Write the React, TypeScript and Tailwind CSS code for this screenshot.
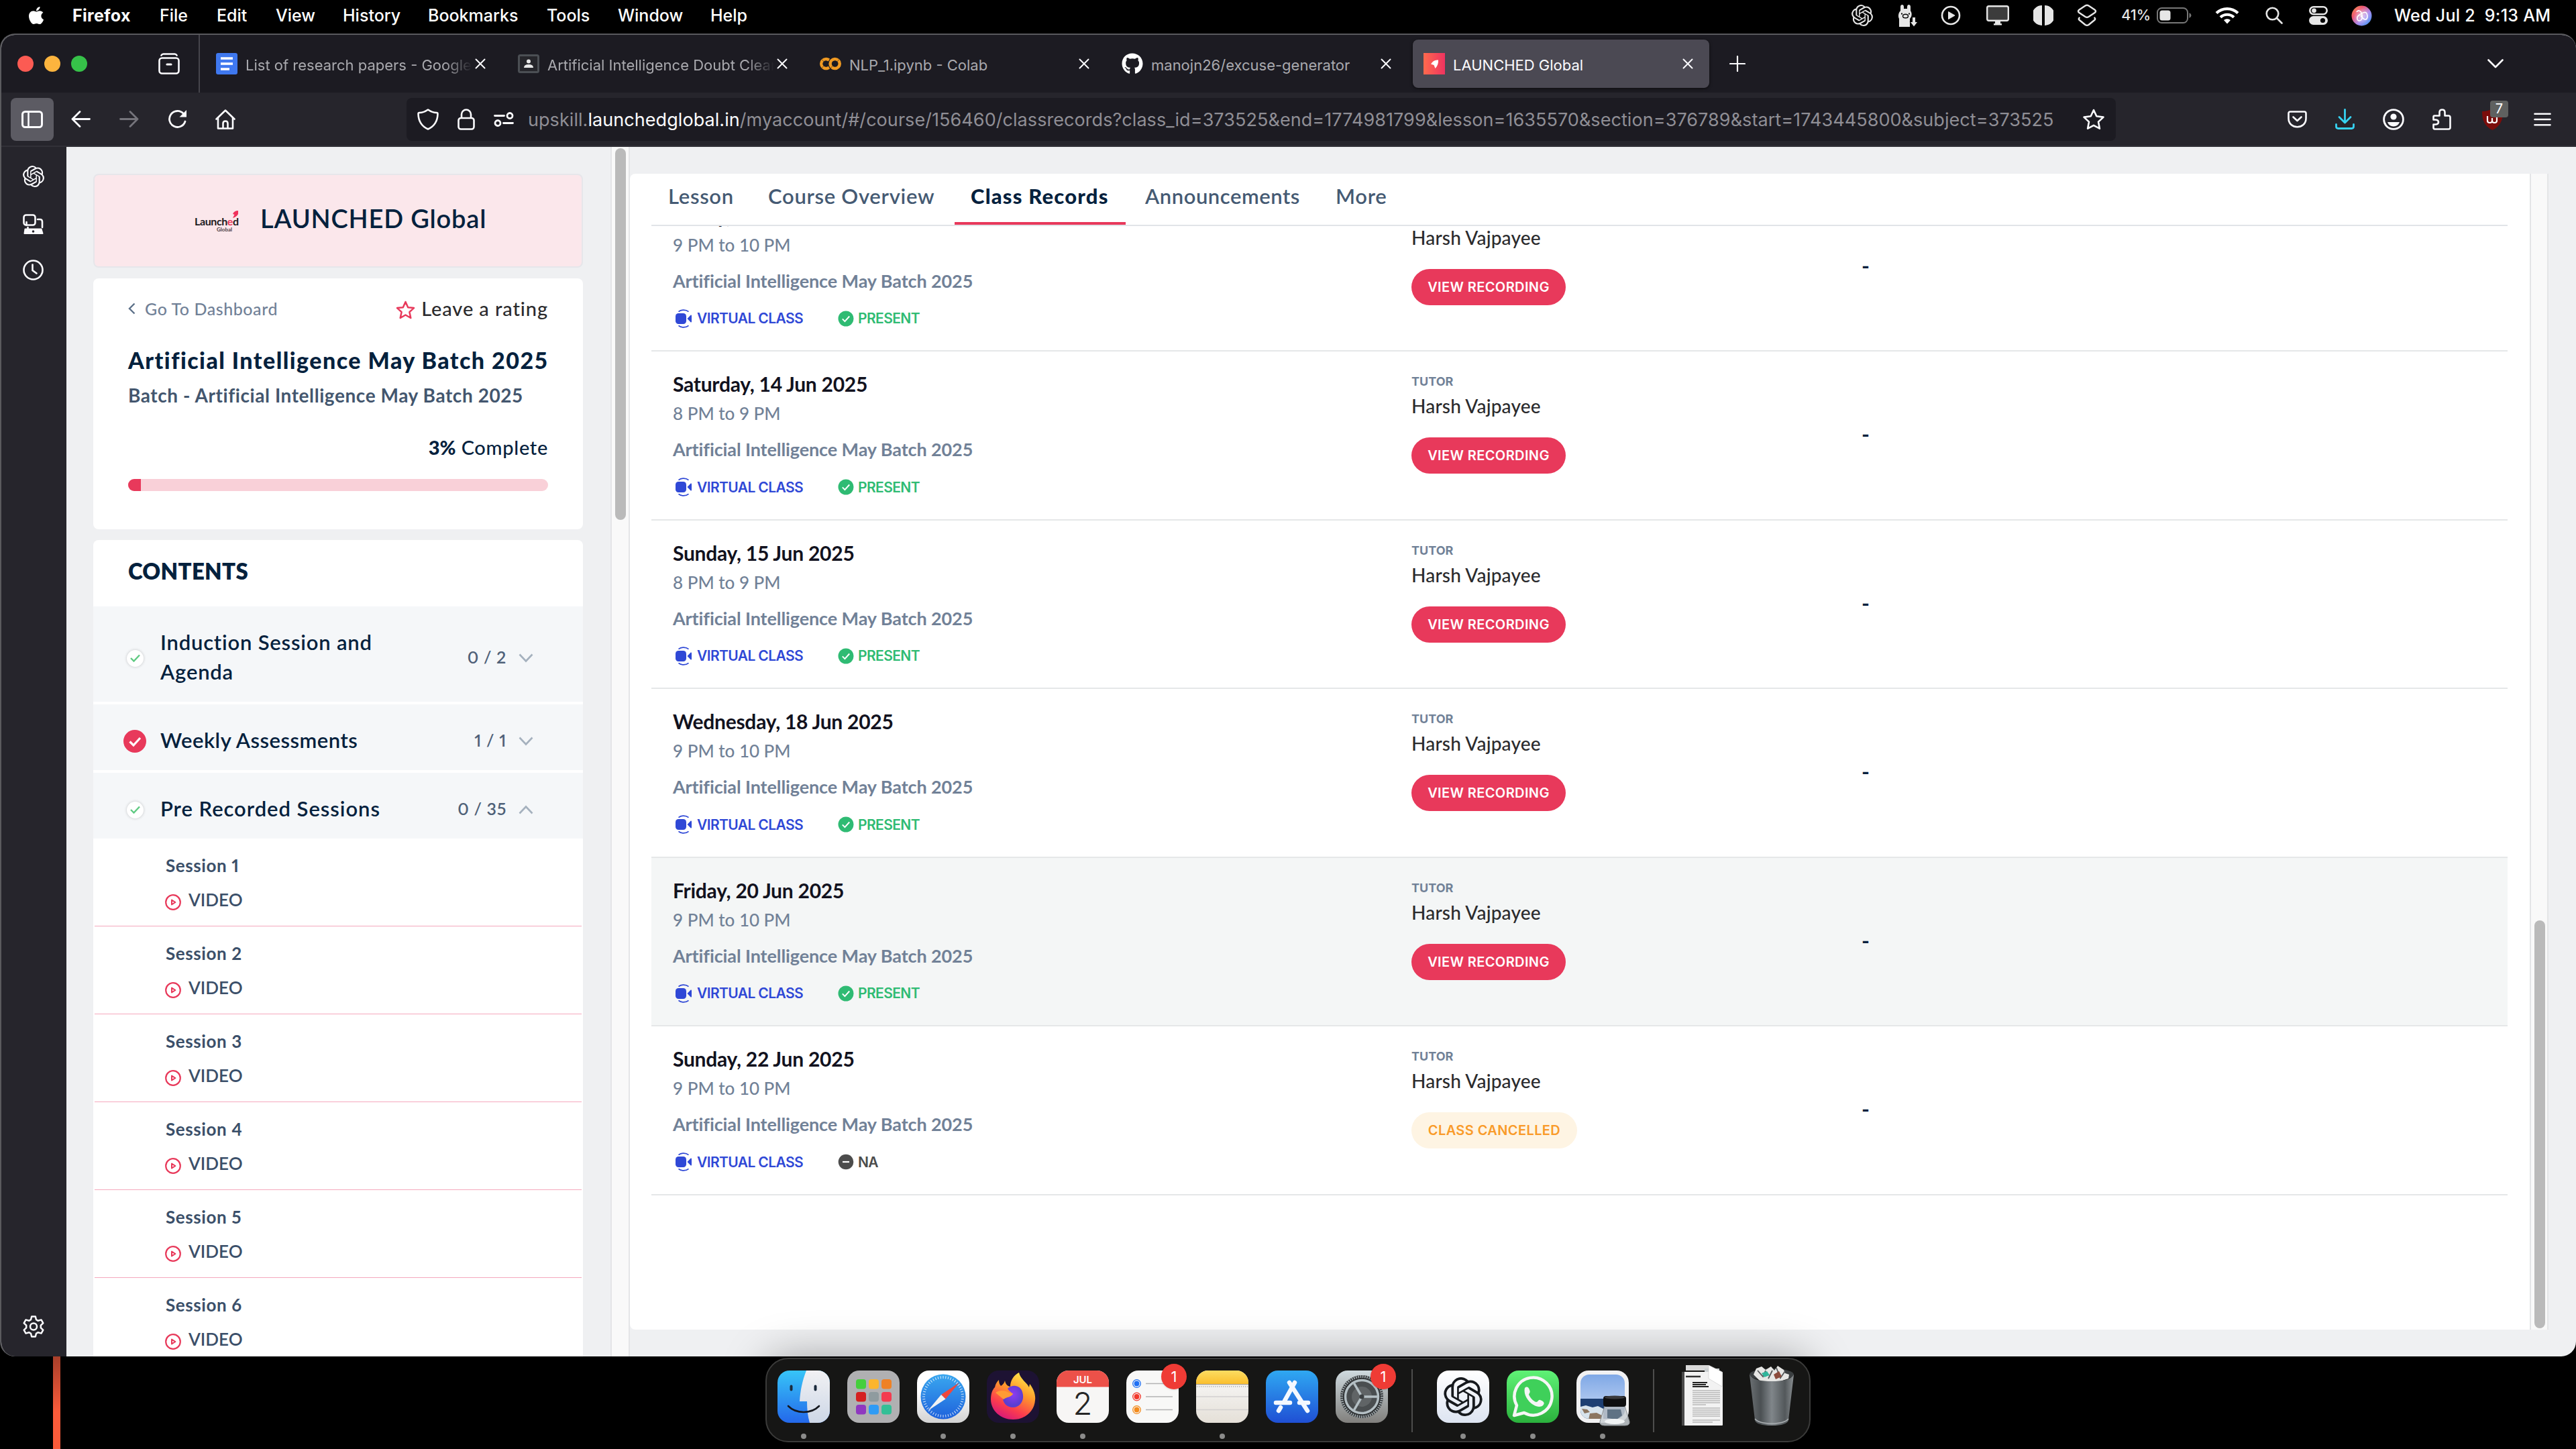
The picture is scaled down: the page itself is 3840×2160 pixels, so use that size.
import type { ReactNode } from "react";
import { FaApple, FaGithub } from "react-icons/fa";
import { SiGooglecolab, SiOpenai } from "react-icons/si";

/* ---------- small shared icons ---------- */

const Cross = () => (
  <svg width="16" height="16" viewBox="0 0 16 16" stroke="#fbfbfe" strokeWidth="2" strokeLinecap="round">
    <path d="M1.5 1.5l13 13M14.5 1.5l-13 13" />
  </svg>
);

const VirtualClassIcon = () => (
  <svg width="24" height="28" viewBox="0 0 24 28" fill="#2f48d6">
    <rect x="0" y="6" width="16" height="16" rx="4.5" />
    <path d="M17.5 14l5-5.3c.6-.6 1.5-.2 1.5.7v9.2c0 .9-.9 1.3-1.5.7z" />
    <path d="M4.5 3.6c4-3.4 11-3.4 15 0M4.5 24.4c4 3.4 11 3.4 15 0" fill="none" stroke="#2f48d6" strokeWidth="1.7" />
  </svg>
);

const PresentIcon = () => (
  <svg width="24" height="24" viewBox="0 0 24 24">
    <circle cx="12" cy="12" r="11.5" fill="#2fbb73" />
    <path d="M6.8 12.4l3.6 3.7 6.8-7.6" fill="none" stroke="#fff" strokeWidth="2" />
  </svg>
);

const NaIcon = () => (
  <svg width="24" height="24" viewBox="0 0 24 24">
    <circle cx="12" cy="12" r="11.3" fill="#4c4c4c" />
    <path d="M7 12h10" stroke="#fff" strokeWidth="2.2" />
  </svg>
);

const PlayIcon = () => (
  <svg width="24" height="24" viewBox="0 0 24 24" fill="none" stroke="#e83a5b" strokeWidth="2.2">
    <circle cx="12" cy="12" r="10.8" />
    <path d="M10 8.6v6.8l5.4-3.4z" strokeLinejoin="round" strokeWidth="2" />
  </svg>
);

const Chevron = ({ up = false }: { up?: boolean }) => (
  <svg width="22" height="14" viewBox="0 0 22 14" fill="none" stroke="#a5b1be" strokeWidth="2.6">
    <path d={up ? "M1.5 12.5L11 2.5l9.5 10" : "M1.5 1.5L11 11.5l9.5-10"} />
  </svg>
);

/* ---------- macOS menu bar ---------- */

const menuItems: { label: string; cls: string }[] = [
  { label: "Firefox", cls: "w-[130px] font-bold tracking-[0.3px]" },
  { label: "File", cls: "w-[85px]" },
  { label: "Edit", cls: "w-[88px]" },
  { label: "View", cls: "w-[100px]" },
  { label: "History", cls: "w-[127px]" },
  { label: "Bookmarks", cls: "w-[177px]" },
  { label: "Tools", cls: "w-[106px]" },
  { label: "Window", cls: "w-[138px]" },
  { label: "Help", cls: "w-[100px]" },
];

function MenuBar() {
  return (
    <div className="flex h-[50px] shrink-0 items-center pr-[38px] pb-1 pl-[39px] font-['Inter',sans-serif] text-[25px] leading-none font-medium whitespace-pre text-white">
      <FaApple className="mr-[39px] h-[30px] w-[30px] shrink-0" />
      {menuItems.map((m) => (
        <span key={m.label} className={m.cls}>{m.label}</span>
      ))}
      <div className="ml-auto flex items-center text-[#e6e6e6]">
        <SiOpenai className="mr-[37px] h-[32px] w-[32px]" />
        <svg className="mr-[35px]" width="29" height="34" viewBox="0 0 29 34" fill="#e6e6e6">
          <path d="M4 10V4c0-4 5-4 5 0v3h5V4c0-4 5-4 5 0v6c2 3 2 6 1 9l-2 3v12H2V22c-2-4-1-9 2-12z" />
          <ellipse cx="11.5" cy="18" rx="4" ry="2.8" fill="none" stroke="#050505" strokeWidth="1.4" />
          <path d="M5 14.5h2M16 14.5h2" stroke="#050505" strokeWidth="2" />
          <path d="M21.5 19.5h5v7h3.4L24 34l-5.9-7.5h3.4z" stroke="#050505" strokeWidth="1" />
        </svg>
        <svg className="mr-[38px]" width="30" height="30" viewBox="0 0 30 30" fill="none" stroke="#e6e6e6" strokeWidth="2.6">
          <circle cx="15" cy="15" r="13" />
          <path d="M11.5 9.5v11l9.5-5.5z" fill="#e6e6e6" strokeWidth="1" />
        </svg>
        <svg className="mr-[36px]" width="34" height="30" viewBox="0 0 34 30">
          <rect x="1.2" y="1.2" width="31.6" height="21.6" rx="2.5" fill="#3c3c3c" stroke="#e6e6e6" strokeWidth="2.4" />
          <path d="M13 24h8v3h2v2.5H11V27h2z" fill="#e6e6e6" />
        </svg>
        <svg className="mr-[35px]" width="30" height="30" viewBox="0 0 30 30" fill="#e6e6e6">
          <path d="M13 0v30A15 15 0 0 1 13 0zM17 0v30A15 15 0 0 0 17 0z" />
        </svg>
        <svg className="mr-[36px]" width="30" height="34" viewBox="0 0 30 34" fill="none" stroke="#e6e6e6" strokeWidth="2.5" strokeLinejoin="round">
          <path d="M12.5 2.500q2.500-1.500 5 0l9 6q3 2 0 4.500l-9 6q-2.500 1.500-5 0l-9-6q-3-2.500 0-4.500z" />
          <path d="M4.500 20q-3.500 2 0 4.500l8 6.500q2.500 1.500 5 0l8-6.500q3.500-2.500 0-4.500" />
        </svg>
        <span className="mr-[9px] text-[21.5px]">41%</span>
        <svg className="mr-[35px]" width="52" height="24" viewBox="0 0 52 24">
          <rect x="1" y="1" width="45" height="22" rx="6.5" fill="none" stroke="#777" strokeWidth="2" />
          <rect x="4.5" y="4.5" width="16" height="15" rx="3.5" fill="#e6e6e6" />
          <path d="M48.5 8v8q3-1.500 3-4t-3-4z" fill="#777" />
        </svg>
        <svg className="mr-[39px]" width="36" height="26" viewBox="0 0 36 26" fill="none" stroke="#fff" strokeWidth="4.2">
          <path d="M2 9.500c9-8.600 23-8.600 32 0" />
          <path d="M8 15.700c5.600-5.300 14.400-5.300 20 0" />
          <path d="M18 25.500l-5-5.500c2.900-2.500 7.100-2.500 10 0z" fill="#fff" stroke="none" />
        </svg>
        <svg className="mr-[39px]" width="26" height="26" viewBox="0 0 26 26" fill="none" stroke="#e6e6e6" strokeWidth="2.6" strokeLinecap="round">
          <circle cx="10.5" cy="10.5" r="8.8" />
          <path d="M17 17l7.500 7.500" />
        </svg>
        <svg className="mr-[35px]" width="28" height="28" viewBox="0 0 28 28">
          <rect x="1.3" y="1.3" width="25.4" height="11" rx="5.5" fill="none" stroke="#e6e6e6" strokeWidth="2.6" />
          <circle cx="7.5" cy="6.8" r="3.4" fill="#e6e6e6" />
          <rect x="0" y="15" width="28" height="13" rx="6.5" fill="#e6e6e6" />
          <circle cx="20.5" cy="21.5" r="3.6" fill="#050505" />
        </svg>
        <svg className="mr-[33px]" width="31" height="31" viewBox="0 0 31 31">
          <defs>
            <linearGradient id="siri" x1="0" y1="0" x2="1" y2="1">
              <stop offset="0" stopColor="#f0a04a" />
              <stop offset=".3" stopColor="#f0566e" />
              <stop offset=".6" stopColor="#a98bf0" />
              <stop offset="1" stopColor="#2f9df5" />
            </linearGradient>
            <radialGradient id="siriglow">
              <stop offset="0" stopColor="#fff" stopOpacity=".6" />
              <stop offset="1" stopColor="#fff" stopOpacity="0" />
            </radialGradient>
          </defs>
          <circle cx="15.5" cy="15.5" r="15" fill="url(#siri)" />
          <circle cx="15.5" cy="15.5" r="13" fill="url(#siriglow)" />
          <path d="M8 10c2-4 7-2 8 4s-1 9-4 9-5-5-1-8 10-7 12-3 1 9-2 9-5-3-7-6" fill="none" stroke="#fff" strokeWidth="1.6" />
        </svg>
        <span className="w-[233px] tracking-[0.28px] text-white">Wed Jul 2  9:13 AM</span>
      </div>
    </div>
  );
}

/* ---------- Firefox tab strip ---------- */

function Tab({ icon, title, width, active = false, fade = false }: { icon: ReactNode; title: string; width: string; active?: boolean; fade?: boolean }) {
  return (
    <div className={`flex h-[72px] shrink-0 items-center rounded-lg pl-4 ${width} ${active ? "bg-[#4b4953] pr-[24px] text-[#fbfbfe] shadow-[0_1px_4px_rgba(0,0,0,0.6)]" : "pr-[32px] text-[#a9a9ae]"}`}>
      <div className="mr-3 flex h-8 w-8 shrink-0 items-center justify-center">{icon}</div>
      <div className={`mr-1 min-w-0 flex-1 overflow-hidden pt-[3px] text-[22px] leading-8 whitespace-nowrap ${fade ? "[mask-image:linear-gradient(to_right,black_88%,transparent)]" : ""}`}>{title}</div>
      <Cross />
    </div>
  );
}

function TabStrip() {
  return (
    <div className="flex h-[86px] shrink-0 items-center bg-[#1c1b22] font-['Inter',sans-serif]">
      <div className="flex h-full w-[296px] shrink-0 items-center border-r-2 border-[#45444b] pl-[24px]">
        <div className="flex gap-4">
          <div className="h-6 w-6 rounded-full bg-[#fc5b53]" />
          <div className="h-6 w-6 rounded-full bg-[#fcb43e]" />
          <div className="h-6 w-6 rounded-full bg-[#36c149]" />
        </div>
        <svg className="ml-[106px]" width="32" height="32" viewBox="0 0 32 32" fill="none" stroke="#fbfbfe" strokeWidth="2.6" strokeLinecap="round" strokeLinejoin="round">
          <path d="M4.500 3.500q1-2 3-2h17q2 0 3 2" />
          <rect x="1.5" y="7.5" width="29" height="23" rx="4" />
          <path d="M13 17h6" strokeWidth="3.2" />
        </svg>
      </div>
      <div className="flex items-center pl-2">
        <Tab
          width="w-[450px]"
          fade
          title="List of research papers - Google Docs"
          icon={
            <svg width="32" height="32" viewBox="0 0 32 32">
              <rect width="32" height="32" rx="3" fill="#3f78ef" />
              <path d="M7 8h18M7 16h18M7 24h13" stroke="#fff" strokeWidth="3.6" />
            </svg>
          }
        />
        <Tab
          width="w-[450px]"
          fade
          title="Artificial Intelligence Doubt Clearing"
          icon={
            <svg width="32" height="28" viewBox="0 0 32 28">
              <rect x="1.5" y="1.5" width="29" height="25" rx="2" fill="#26262b" stroke="#4b4f54" strokeWidth="3" />
              <circle cx="16" cy="10.5" r="3" fill="#e8e8e8" />
              <path d="M9 20q0-5 7-5t7 5z" fill="#e8e8e8" />
            </svg>
          }
        />
        <Tab width="w-[450px]" title="NLP_1.ipynb - Colab" icon={<SiGooglecolab className="h-8 w-8 text-[#f09a22]" />} />
        <Tab width="w-[450px]" title="manojn26/excuse-generator" icon={<FaGithub className="h-8 w-8 text-white" />} />
        <Tab
          width="w-[442px]"
          active
          title="LAUNCHED Global"
          icon={
            <svg width="32" height="32" viewBox="0 0 32 32">
              <defs>
                <linearGradient id="lg" x1="0" y1="0" x2="1" y2="0">
                  <stop offset="0" stopColor="#ff6a4d" />
                  <stop offset="1" stopColor="#ee3360" />
                </linearGradient>
              </defs>
              <rect width="32" height="32" fill="url(#lg)" />
              <path d="M22 10.500q-7-1-11 6l4.500 1.500 2 5q5-5 4.500-12.500z" fill="#fff" />
            </svg>
          }
        />
      </div>
      <svg className="ml-[30px]" width="24" height="24" viewBox="0 0 24 24" stroke="#fbfbfe" strokeWidth="2.2" strokeLinecap="round">
        <path d="M12 1v22M1 12h22" />
      </svg>
      <svg className="mr-[108px] ml-auto" width="24" height="14" viewBox="0 0 24 14" fill="none" stroke="#fbfbfe" strokeWidth="2.6" strokeLinecap="round" strokeLinejoin="round">
        <path d="M1.500 1.500L12 12 22.500 1.500" />
      </svg>
    </div>
  );
}

/* ---------- Firefox toolbar ---------- */

function Toolbar() {
  return (
    <div className="flex h-[81px] shrink-0 items-center border-b-2 border-[#323138] bg-[#26252c] pl-[14px] font-['Inter',sans-serif]">
      <div className="flex h-16 w-16 items-center justify-center rounded-lg bg-[#5c5b63]">
        <svg width="32" height="26" viewBox="0 0 32 26" fill="none" stroke="#fbfbfe" strokeWidth="3">
          <rect x="1.5" y="1.5" width="29" height="23" rx="4" />
          <path d="M10.500 2v22" strokeWidth="2.6" />
        </svg>
      </div>
      <svg className="ml-[26px]" width="29" height="25" viewBox="0 0 29 25" fill="none" stroke="#fbfbfe" strokeWidth="2.8" strokeLinecap="round" strokeLinejoin="round">
        <path d="M13 1.500L2 12.500l11 11M2 12.500h25.500" />
      </svg>
      <svg className="ml-[43px]" width="29" height="25" viewBox="0 0 29 25" fill="none" stroke="#75747b" strokeWidth="2.8" strokeLinecap="round" strokeLinejoin="round">
        <path d="M16 1.500l11 11-11 11M27 12.500H1.500" />
      </svg>
      <svg className="ml-[43px]" width="30" height="30" viewBox="0 0 30 30" fill="none" stroke="#fbfbfe" strokeWidth="2.8" strokeLinecap="round">
        <path d="M26 18a12 12 0 1 1-2.500-11.500" />
        <path d="M28 1v10.500H17.500z" fill="#fbfbfe" stroke="none" />
      </svg>
      <svg className="ml-[41px]" width="30" height="30" viewBox="0 0 30 30" fill="none" stroke="#fbfbfe" strokeWidth="2.6" strokeLinejoin="round" strokeLinecap="round">
        <path d="M1.500 14.500L15 1.500l13.500 13" />
        <path d="M4 12.500v16h22v-16" />
        <path d="M11.500 28v-7q0-3.500 3.500-3.500t3.500 3.500v7" />
      </svg>
      <div className="ml-[255px] flex h-16 w-[2548px] shrink-0 items-center rounded-lg bg-[#1c1b22] pl-4">
        <svg width="32" height="32" viewBox="0 0 32 32" fill="none" stroke="#fbfbfe" strokeWidth="2.6" strokeLinejoin="round">
          <path d="M16 1.500q6.500 4.500 13 4.500 1.500 0 1.500 2c-.3 10-4.500 18-14.500 22.500C6 26 1.800 18 1.500 8q0-2 1.500-2 6.500 0 13-4.500z" />
        </svg>
        <svg className="ml-[28px]" width="26" height="32" viewBox="0 0 26 32" fill="none" stroke="#fbfbfe" strokeWidth="2.6">
          <rect x="1.5" y="14" width="23" height="16.5" rx="3.5" />
          <path d="M6 14V8.500a7 7 0 0 1 14 0V14" />
        </svg>
        <svg className="ml-[28px]" width="30" height="22" viewBox="0 0 30 22" fill="none" stroke="#fbfbfe" strokeWidth="2.8" strokeLinecap="round">
          <circle cx="24" cy="5.5" r="4" />
          <path d="M1.500 5.500h14M14.500 16.500h14" />
          <circle cx="6" cy="16.5" r="4" />
        </svg>
        <div className="ml-[21px] w-[2300px] pt-0.5 text-[27px] leading-none tracking-[0.06px] whitespace-nowrap text-[#8f8e95]">
          upskill.<span className="text-[#fbfbfe]">launchedglobal.in</span>/myaccount/#/course/156460/classrecords?class_id=373525&amp;end=1774981799&amp;lesson=1635570&amp;section=376789&amp;start=1743445800&amp;subject=373525
        </div>
        <svg className="ml-[17px]" width="34" height="32" viewBox="0 0 34 32" fill="none" stroke="#fbfbfe" strokeWidth="2.6" strokeLinejoin="round">
          <path d="M17 2l4.300 9.300 10.200 1.300-7.500 7 1.900 10.100L17 24.800l-8.900 4.900L10 19.600l-7.500-7 10.200-1.300z" />
        </svg>
      </div>
      <div className="ml-auto flex items-center pr-[37px]">
        <svg width="29" height="26" viewBox="0 0 29 26" fill="none" stroke="#fbfbfe" strokeWidth="2.6" strokeLinecap="round" strokeLinejoin="round">
          <path d="M4 1.500h21q2.500 0 2.500 2.500v7.500c0 17-26 17-26 0V4Q1.500 1.500 4 1.500z" />
          <path d="M8.500 9.500l6 5.500 6-5.500" />
        </svg>
        <svg className="ml-[42px]" width="29" height="31" viewBox="0 0 29 31" fill="none" stroke="#36d3f2" strokeWidth="2.8" strokeLinecap="round" strokeLinejoin="round">
          <path d="M14.500 1.500v19M6 12.500l8.500 8.500 8.500-8.500M1.500 23.500v3q0 3 3 3h20q3 0 3-3v-3" />
        </svg>
        <svg className="ml-[42px]" width="32" height="32" viewBox="0 0 32 32" fill="none" stroke="#fbfbfe" strokeWidth="2.8">
          <circle cx="16" cy="16" r="14.4" />
          <circle cx="16" cy="12" r="4.6" fill="#fbfbfe" stroke="none" />
          <path d="M7 20h18q-2.500 6.500-9 6.500T7 20z" fill="#fbfbfe" stroke="none" />
        </svg>
        <svg className="ml-[42px]" width="28" height="32" viewBox="0 0 28 32" fill="none" stroke="#fbfbfe" strokeWidth="2.6" strokeLinejoin="round">
          <path d="M3 10.500h7.500v-5q0-4 4-4t4 4v5H24q2.500 0 2.500 2.500v15q0 2.500-2.500 2.500H3.500Q1.500 30.500 1.500 28v-4.500h3.500q4-.5 4-3.500t-4-3.500H1.500V12.500q0-2 1.500-2z" />
        </svg>
        <div className="relative ml-[46px] h-8 w-[40px]">
          <svg width="31" height="32" viewBox="0 0 31 32">
            <path d="M15.500 0q7 4 15.500 4c0 14-4 22-15.500 28C4 26 0 18 0 4q8.500 0 15.500-4z" fill="#7b0d0b" />
            <path d="M8 11v7q0 3 3.500 3t3.500-3v-4 4q0 3 3.500 3t3.500-3v-7" fill="none" stroke="#fff" strokeWidth="2.2" />
          </svg>
          <div className="absolute -top-[12px] left-[12px] flex h-[25px] w-[27px] items-center justify-center rounded-[4px] bg-[#5f6160] text-[20px] leading-none text-white">7</div>
        </div>
        <svg className="ml-[37px]" width="26" height="20" viewBox="0 0 26 20" stroke="#fbfbfe" strokeWidth="2.6" strokeLinecap="round">
          <path d="M1.500 1.800h23M1.500 10h23M1.500 18.200h23" />
        </svg>
      </div>
    </div>
  );
}

function SideRail() {
  return (
    <div className="flex w-[97px] shrink-0 flex-col items-center bg-[#26252c] pt-[28px] pr-[2px] pb-[28px] text-[#fbfbfe]">
      <SiOpenai className="h-8 w-8" />
      <svg className="mt-[40px]" width="31" height="31" viewBox="0 0 31 31" fill="none" stroke="#fbfbfe" strokeWidth="2.6" strokeLinecap="round" strokeLinejoin="round">
        <rect x="1.5" y="1.5" width="17" height="15" rx="3.5" />
        <path d="M22 8h3.500q3.500 0 3.500 3.500V20M5.500 12v4.500M7.500 20v2" />
        <path d="M3.500 22.500h24l2 6.500H2.500z" fill="#fbfbfe" strokeWidth="2" />
        <circle cx="15.5" cy="26" r="1.8" fill="#26252c" stroke="none" />
      </svg>
      <svg className="mt-[37px]" width="31" height="31" viewBox="0 0 31 31" fill="none" stroke="#fbfbfe" strokeWidth="2.6" strokeLinecap="round">
        <circle cx="15.5" cy="15.5" r="14" />
        <path d="M14.500 7.500v8.500l6 4.500" />
      </svg>
      <svg className="mt-auto" width="32" height="33" viewBox="0 0 32 33" fill="none" stroke="#fbfbfe" strokeWidth="2.5" strokeLinejoin="round">
        <path d="M13.200 1.500h5.600l1.200 4.700 2.800 1.600 4.700-1.400 2.800 4.900-3.500 3.400v3.600l3.500 3.400-2.800 4.900-4.700-1.400-2.800 1.600-1.200 4.700h-5.600L12 26.800l-2.800-1.600-4.700 1.400-2.800-4.900 3.500-3.400v-3.600l-3.500-3.400 2.800-4.900 4.700 1.400L12 6.200z" />
        <circle cx="16" cy="16.5" r="5" />
      </svg>
    </div>
  );
}

/* ---------- course sidebar ---------- */

const CheckBadge = ({ done = false }: { done?: boolean }) =>
  done ? (
    <svg className="-ml-[5px] shrink-0" width="34" height="34" viewBox="0 0 34 34">
      <circle cx="17" cy="17" r="17" fill="#e8395b" />
      <path d="M9.500 17.500l5.500 5.500 10-11" fill="none" stroke="#fff" strokeWidth="3.2" />
    </svg>
  ) : (
    <div className="mr-[4px] flex h-[25px] w-[25px] shrink-0 items-center justify-center rounded-full bg-white shadow-[0_0_4px_rgba(0,0,0,0.2)]">
      <svg width="15" height="12" viewBox="0 0 15 12" fill="none" stroke="#5fca82" strokeWidth="2.4">
        <path d="M1 6l4.500 4.500L14 1.500" />
      </svg>
    </div>
  );

function Section({ title, count, height, done, open, last, tracking }: { title: string; count: string; height: string; done?: boolean; open?: boolean; last?: boolean; tracking: string }) {
  return (
    <div className={`flex items-center bg-[#f5f7f9] pt-3 pr-[74px] pl-[50px] ${height} ${last ? "" : "mb-1"}`}>
      <CheckBadge done={done} />
      <div className={`-mt-[5px] w-[380px] shrink-0 pl-[21px] text-[31px] leading-[44px] font-semibold text-[#04213d] ${tracking}`}>{title}</div>
      <div className="-mt-1 flex-1 pr-[18px] text-right text-[25px] leading-8 font-semibold tracking-[0.7px] whitespace-nowrap text-[#4f6178] proportional-nums">{count}</div>
      <Chevron up={open} />
    </div>
  );
}

function CourseSidebar() {
  return (
    <div className="flex w-[811px] shrink-0 flex-col pt-10 pr-[41px] pl-10 font-['Lato',sans-serif] whitespace-nowrap">
      <div className="flex h-[140px] shrink-0 items-center rounded-lg border-2 border-[#e6e6ea] bg-[#fbe7eb] pb-2 pl-[149px]">
        <div className="w-[98px] pt-[13px]">
          <div className="relative w-[66px]">
            <div className="pt-1 text-[16px] leading-[17px] font-bold tracking-[-0.4px] text-[#1d1a1e]">
              Launch<span className="text-[#e8395b]">e</span>d
            </div>
            <div className="pr-[10px] text-right text-[8px] leading-[9px] font-bold text-[#4a3b42]">Global</div>
            <svg className="absolute -top-[3px] right-0" width="10" height="12" viewBox="0 0 10 12">
              <path d="M9 0Q3 0 1 5l2.500 1L1 11q6-2 8-6z" fill="#f0325c" />
            </svg>
          </div>
        </div>
        <div className="text-[38px] leading-none font-semibold tracking-[0.8px] text-[#04213d]">LAUNCHED Global</div>
      </div>

      <div className="mt-4 h-[374px] shrink-0 rounded-lg bg-white px-[52px] pt-[25px]">
        <div className="flex h-10 items-center">
          <svg width="11" height="18" viewBox="0 0 11 18" fill="none" stroke="#5d7189" strokeWidth="2.4">
            <path d="M9.500 1.500L2 9l7.500 7.500" />
          </svg>
          <span className="ml-[14px] text-[25px] leading-none font-medium tracking-[0.55px] text-[#718197]">Go To Dashboard</span>
          <svg className="mt-1 ml-auto" width="29" height="28" viewBox="0 0 29 28" fill="none" stroke="#e8395b" strokeWidth="2.5" strokeLinejoin="round">
            <path d="M14.500 2l3.700 8.200 8.800.9-6.600 6.100 1.900 8.800-7.800-4.500L6.700 26l1.900-8.800L2 11.100l8.800-.9z" />
          </svg>
          <span className="-mt-[2px] ml-[9px] text-[29px] leading-none font-medium tracking-[0.9px] text-[#2b2b2d]">Leave a rating</span>
        </div>
        <div className="mt-[35px] text-[34px] leading-[44px] font-black tracking-[1.45px] text-[#04213d]">Artificial Intelligence May Batch 2025</div>
        <div className="mt-[12px] text-[28px] leading-9 font-bold tracking-[0.57px] text-[#43566e]">Batch - Artificial Intelligence May Batch 2025</div>
        <div className="mt-[42px] text-right text-[29px] leading-9 font-medium tracking-[0.7px] text-[#04213d]">
          <span className="font-black tracking-normal">3%</span> Complete
        </div>
        <div className="mt-[29px] h-[18px] overflow-hidden rounded-full bg-[#f9d0d8]">
          <div className="h-full w-[3%] bg-[#e8395b]" />
        </div>
      </div>

      <div className="mt-4 flex min-h-0 flex-1 flex-col overflow-hidden rounded-t-lg bg-white">
        <div className="h-[99px] shrink-0 pt-[24px] pl-[52px] text-[33px] leading-[44px] font-extrabold tracking-[0.3px] text-[#04213d]">CONTENTS</div>
        <Section title="Induction Session and Agenda" count="0 / 2" height="h-[142px] shrink-0 whitespace-normal" tracking="tracking-[0.8px]" />
        <Section title="Weekly Assessments" count="1 / 1" height="h-[98px] shrink-0" done tracking="tracking-[0.5px]" />
        <Section title="Pre Recorded Sessions" count="0 / 35" height="h-[98px] shrink-0" open last tracking="tracking-[0.95px]" />
        {[1, 2, 3, 4, 5, 6].map((n) => (
          <div key={n} className="mx-0.5 h-[131px] shrink-0 border-b border-[#f5a8bd] pt-[22px] pl-[106px] text-[#3b4f69]">
            <div className="text-[26px] leading-9 font-bold tracking-[0.6px] proportional-nums">Session {n}</div>
            <div className="mt-[15px] flex h-9 items-center">
              <div className="mt-[7px] -ml-px">
                <PlayIcon />
              </div>
              <span className="ml-[11px] text-[26px] leading-9 font-semibold">VIDEO</span>
            </div>
          </div>
        ))}
      </div>
    </div>
  );
}

/* ---------- class records ---------- */

const tabs: { label: string; cls: string }[] = [
  { label: "Lesson", cls: "w-[144px] text-[#455a73] font-semibold tracking-[0.7px]" },
  { label: "Course Overview", cls: "w-[297px] text-[#455a73] font-semibold tracking-[0.7px]" },
  { label: "Class Records", cls: "w-[255px] border-b-4 border-[#e8395b] text-[#04213d] font-black tracking-[1.2px]" },
  { label: "Announcements", cls: "w-[279px] text-[#455a73] font-semibold tracking-[0.55px]" },
  { label: "More", cls: "w-[126px] text-[#455a73] font-semibold tracking-[0.7px]" },
];

type Rec = { date: string; time: string; hover?: boolean; cancelled?: boolean };
const records: Rec[] = [
  { date: "Friday, 13 Jun 2025", time: "9 PM to 10 PM" },
  { date: "Saturday, 14 Jun 2025", time: "8 PM to 9 PM" },
  { date: "Sunday, 15 Jun 2025", time: "8 PM to 9 PM" },
  { date: "Wednesday, 18 Jun 2025", time: "9 PM to 10 PM" },
  { date: "Friday, 20 Jun 2025", time: "9 PM to 10 PM", hover: true },
  { date: "Sunday, 22 Jun 2025", time: "9 PM to 10 PM", cancelled: true },
];

function RecordRow({ r }: { r: Rec }) {
  return (
    <div className={`flex h-[251.5px] shrink-0 border-b-2 border-[#e5e7e8] pl-8 ${r.hover ? "bg-[#f4f6f6]" : ""}`}>
      <div className="w-[1101px] pt-[30px]">
        <div className="text-[30px] leading-9 font-bold tracking-[-0.25px] text-[#12121e]">{r.date}</div>
        <div className="mt-2 text-[26px] leading-9 font-medium text-[#718197]">{r.time}</div>
        <div className="mt-[18px] text-[27px] leading-9 font-bold tracking-[-0.1px] text-[#718197]">Artificial Intelligence May Batch 2025</div>
        <div className="mt-5 flex h-9 items-center pl-1 font-['Inter',sans-serif] text-[21px] leading-none font-semibold tracking-[-0.6px]">
          <VirtualClassIcon />
          <span className="ml-2 w-[210px] text-[#2f48d6]">VIRTUAL CLASS</span>
          {r.cancelled ? <NaIcon /> : <PresentIcon />}
          <span className={`ml-[6px] ${r.cancelled ? "text-[#4c4c4c]" : "text-[#2fbb73]"}`}>{r.cancelled ? "NA" : "PRESENT"}</span>
        </div>
      </div>
      <div className="w-[671px] pt-[33px]">
        <div className="font-['Inter',sans-serif] text-[18px] leading-6 font-bold text-[#718197]">TUTOR</div>
        <div className="mt-[6px] text-[28px] leading-9 font-medium tracking-[0.2px] text-[#2b2b2d]">Harsh Vajpayee</div>
        <div className={`mt-[29px] flex h-[54px] items-center justify-center rounded-full font-['Inter',sans-serif] text-[20px] font-semibold tracking-[0.4px] ${r.cancelled ? "w-[247px] bg-[#fef4e3] text-[#f99b2a]" : "w-[230px] bg-[#e8395b] text-white"}`}>
          {r.cancelled ? "CLASS CANCELLED" : "VIEW RECORDING"}
        </div>
      </div>
      <div className="pt-[101px] text-[32px] leading-[44px] font-bold text-[#04213d]">-</div>
    </div>
  );
}

function ClassRecords() {
  return (
    <div className="flex min-w-0 flex-1 pt-10 pr-[41px] pb-10 font-['Lato',sans-serif] whitespace-nowrap">
      <div className="flex min-w-0 flex-1 flex-col overflow-hidden rounded-l-lg bg-white pr-[33px] pl-8">
        <div className="flex h-[78px] shrink-0 gap-[5px] border-b-2 border-[#e1e4e8] pl-px">
          {tabs.map((t) => (
            <div key={t.label} className={`pt-[11px] pl-6 text-[31px] leading-[44px] ${t.cls}`}>{t.label}</div>
          ))}
        </div>
        <div className="min-h-0 flex-1 overflow-hidden">
          <div className="-mt-[64.5px] flex flex-col">
            {records.map((r) => (
              <RecordRow key={r.date} r={r} />
            ))}
          </div>
        </div>
      </div>
      <div className="flex w-7 shrink-0 flex-col justify-end border-x-2 border-[#e4e5e7] bg-[#f9f9f9] pb-[2px] pl-[5px]">
        <div className="h-[608px] w-4 rounded-full bg-[#bababa]" />
      </div>
    </div>
  );
}

/* ---------- dock ---------- */

function DockApp({ children, dot = false, badge = false }: { children: ReactNode; dot?: boolean; badge?: boolean }) {
  return (
    <div className="relative flex w-[78px] shrink-0 flex-col items-center">
      <svg width="78" height="78" viewBox="0 0 78 78" className="overflow-visible">{children}</svg>
      <div className={`mt-[16px] h-2 w-2 rounded-full ${dot ? "bg-[#8b8b8a]" : "bg-transparent"}`} />
      {badge && (
        <div className="absolute -top-[10px] -right-[12px] flex h-[38px] w-[38px] items-center justify-center rounded-full bg-[#ef3b35] text-[22px] leading-none text-white shadow">1</div>
      )}
    </div>
  );
}

const launchpadColors = ["#45cf3c", "#fbb52d", "#ef8125", "#d42020", "#8f9b9f", "#f43b50", "#8f38c0", "#2f9bf5", "#33bf96"];
const compassTicks = Array.from({ length: 48 }, (_, i) => i * 7.5);
const spokes = [0, 120, 240];

function Dock() {
  return (
    <div className="absolute top-[2024px] left-[1141px] flex h-[126px] w-[1558px] gap-[26px] rounded-[34px] border-2 border-[#3b3b3a] bg-[#161615] pt-[17px] pl-[16px] font-['Inter',sans-serif] shadow-[0_0_64px_rgba(0,0,0,0.34)]">
      <DockApp dot>
        <defs>
          <linearGradient id="fb" x1="0" y1="0" x2="0" y2="1"><stop offset="0" stopColor="#37c5f8" /><stop offset="1" stopColor="#2468ea" /></linearGradient>
          <linearGradient id="fw" x1="0" y1="0" x2="0" y2="1"><stop offset="0" stopColor="#f1f1f4" /><stop offset="1" stopColor="#cdd7e6" /></linearGradient>
          <clipPath id="fc"><rect width="78" height="78" rx="18" /></clipPath>
        </defs>
        <g clipPath="url(#fc)">
          <rect width="78" height="78" fill="url(#fb)" />
          <path d="M43 0c-6 15-9 30-10 46h11c0 12 1 22 4 32h30V0z" fill="url(#fw)" />
        </g>
        <path d="M20.500 23.500v5M56.500 23.500v5" stroke="#1a2a3c" strokeWidth="4" strokeLinecap="round" />
        <path d="M16 53c12 12 34 12 46 0" stroke="#15181e" strokeWidth="2.6" fill="none" strokeLinecap="round" />
      </DockApp>
      <DockApp>
        <rect width="78" height="78" rx="18" fill="#b0b0b2" />
        {launchpadColors.map((c, i) => (
          <rect key={c} x={13 + (i % 3) * 19} y={13 + Math.floor(i / 3) * 19} width="15" height="14.5" rx="4" fill={c} />
        ))}
      </DockApp>
      <DockApp dot>
        <defs>
          <linearGradient id="sb" x1="0" y1="0" x2="0" y2="1"><stop offset="0" stopColor="#39a7ef" /><stop offset="1" stopColor="#1f62dc" /></linearGradient>
          <linearGradient id="sw" x1="0" y1="0" x2="0" y2="1"><stop offset=".4" stopColor="#fff" /><stop offset="1" stopColor="#d2d2d2" /></linearGradient>
        </defs>
        <rect width="78" height="78" rx="18" fill="url(#sw)" />
        <circle cx="39" cy="39" r="33.5" fill="url(#sb)" />
        {compassTicks.map((a) => (
          <path key={a} d="M39 8v4" stroke="#fff" strokeOpacity=".8" strokeWidth="1" transform={`rotate(${a} 39 39)`} />
        ))}
        <path d="M63 18L42.500 42.500 36 36z" fill="#f0473b" />
        <path d="M16 60l20-24 6.500 6.500z" fill="#f2f2f2" />
      </DockApp>
      <DockApp dot>
        <defs>
          <linearGradient id="ff" x1=".8" y1="0" x2=".3" y2="1"><stop offset="0" stopColor="#fff04e" /><stop offset=".4" stopColor="#ff9a2b" /><stop offset=".75" stopColor="#fb3c4e" /><stop offset="1" stopColor="#d6187a" /></linearGradient>
          <radialGradient id="fp" cx=".5" cy=".4"><stop offset="0" stopColor="#8f3bf2" /><stop offset="1" stopColor="#5b3ed0" /></radialGradient>
        </defs>
        <rect width="78" height="78" rx="18" fill="#1d1233" />
        <path d="M18 14c0 4 1 7 3 9 3-2 5-4 6-8 1 5 3 8 8 9 0-9 5-17 13-21 2 10 13 16 15 22l1-5c6 8 9 16 8 24-1 17-15 29-33 29S6 60 6 43c0-8 2-14 6-18 1-5 3-8 6-11z" fill="url(#ff)" />
        <path d="M31 27c8-8 20-4 22 5 4 12-3 23-14 23-10 0-16-8-15-16 5 0 10-2 13-6-3-2-5-4-6-6z" fill="url(#fp)" />
        <path d="M13 33c5-4 14-4 20 0 3 1 6 0 6 2-3 5-9 4-14 8z" fill="#ff9b35" />
      </DockApp>
      <DockApp dot>
        <defs>
          <clipPath id="cc"><rect width="78" height="78" rx="18" /></clipPath>
        </defs>
        <g clipPath="url(#cc)">
          <rect width="78" height="78" fill="#f7f6f5" />
          <rect width="78" height="24.5" fill="#ec5149" />
        </g>
        <text x="39" y="18.5" fontSize="15" fontWeight="600" textAnchor="middle" fill="#fff">JUL</text>
        <text x="39" y="66" fontSize="47" fontWeight="300" textAnchor="middle" fill="#262626">2</text>
      </DockApp>
      <DockApp badge>
        <rect width="78" height="78" rx="18" fill="#f8f8f7" />
        {["#1f70f3", "#f2382c", "#f38b1d"].map((c, i) => (
          <g key={c} transform={`translate(0 ${i * 19.5})`}>
            <circle cx="15.5" cy="19.5" r="5.8" fill="none" stroke={c} strokeWidth="1.3" />
            <circle cx="15.5" cy="19.5" r="3.9" fill={c} />
            <path d="M29 19.500h40" stroke="#b3b3b3" strokeWidth="1.4" />
          </g>
        ))}
      </DockApp>
      <DockApp dot>
        <defs>
          <clipPath id="nc"><rect width="78" height="78" rx="18" /></clipPath>
          <linearGradient id="ny" x1="0" y1="0" x2="0" y2="1"><stop offset="0" stopColor="#fcdc62" /><stop offset="1" stopColor="#fbbf2d" /></linearGradient>
          <linearGradient id="nw" x1="0" y1="0" x2="0" y2="1"><stop offset="0" stopColor="#fafafa" /><stop offset="1" stopColor="#e5e0d8" /></linearGradient>
        </defs>
        <g clipPath="url(#nc)">
          <rect width="78" height="78" fill="url(#nw)" />
          <rect width="78" height="20" fill="url(#ny)" />
          <path d="M0 20.700h78" stroke="#a79f8d" strokeWidth="1.2" />
          <path d="M1 24h76" stroke="#aaa" strokeWidth="1.5" strokeDasharray="1.2 1.8" />
          <path d="M0 39h78M0 58.500h78" stroke="#d2d0cf" strokeWidth="1.3" />
        </g>
      </DockApp>
      <DockApp>
        <defs>
          <linearGradient id="as" x1="0" y1="0" x2="0" y2="1"><stop offset="0" stopColor="#2fa8f2" /><stop offset="1" stopColor="#1f4fd4" /></linearGradient>
        </defs>
        <rect width="78" height="78" rx="18" fill="url(#as)" />
        <g stroke="#f4f8ff" strokeWidth="6.5" strokeLinecap="round">
          <path d="M43 18L28 45M35 18l27 42M15 48h21M50 48h13M22 55l-3 5" />
        </g>
      </DockApp>
      <DockApp badge>
        <defs>
          <linearGradient id="sg" x1="0" y1="0" x2="0" y2="1"><stop offset="0" stopColor="#cfdadf" /><stop offset="1" stopColor="#81807d" /></linearGradient>
        </defs>
        <rect width="78" height="78" rx="18" fill="url(#sg)" />
        <circle cx="39" cy="39" r="32" fill="#2d3032" />
        <circle cx="39" cy="39" r="30" fill="none" stroke="#9aa2a6" strokeWidth="4" strokeDasharray="1.8 1.5" />
        <circle cx="39" cy="39" r="24.5" fill="#4a4e50" stroke="#b4bfc4" strokeWidth="3.5" />
        <circle cx="39" cy="39" r="15" fill="#606466" />
        {spokes.map((a) => (
          <path key={a} d="M39 39h23" stroke="#b4bfc4" strokeWidth="3.5" transform={`rotate(${a} 39 39)`} />
        ))}
        <circle cx="39" cy="39" r="3.5" fill="#3c4042" />
      </DockApp>
      <div className="-mt-[2px] -mr-px ml-[9px] h-[94px] w-[2px] shrink-0 bg-[#4d4d4c]" />
      <div className="ml-[11px] flex gap-[26px]">
        <DockApp dot>
          <defs>
            <linearGradient id="og" x1="0" y1="0" x2="0" y2="1"><stop offset="0" stopColor="#fff" /><stop offset="1" stopColor="#dde4f1" /></linearGradient>
          </defs>
          <rect width="78" height="78" rx="18" fill="url(#og)" />
          <SiOpenai x="10" y="10" size={58} color="#16191d" />
        </DockApp>
        <DockApp dot>
          <defs>
            <linearGradient id="wg" x1="0" y1="0" x2="0" y2="1"><stop offset="0" stopColor="#5ff276" /><stop offset="1" stopColor="#2bb13d" /></linearGradient>
          </defs>
          <rect width="78" height="78" rx="18" fill="url(#wg)" />
          <path d="M11 67l4-15a28 28 0 1 1 11 11z" fill="#3fd05a" stroke="#f6f6f6" strokeWidth="4.5" strokeLinejoin="round" />
          <path d="M27 26c3-3 6-1 7 3 2 4-1 5-1 7 3 6 6 9 11 11 3 0 3-4 6-3 6 2 7 5 4 8-9 8-31-10-27-26z" fill="#f6f6f6" />
        </DockApp>
        <DockApp dot>
          <defs>
            <linearGradient id="sk" x1="0" y1="0" x2="0" y2="1"><stop offset="0" stopColor="#7fa8e6" /><stop offset="1" stopColor="#a9c4ee" /></linearGradient>
            <clipPath id="pc"><rect x="6" y="6" width="66" height="66" rx="13" /></clipPath>
          </defs>
          <rect width="78" height="78" rx="18" fill="#f1f1f2" />
          <g clipPath="url(#pc)">
            <rect x="6" y="6" width="66" height="36" fill="url(#sk)" />
            <rect x="6" y="42" width="66" height="32" fill="#1e3f72" />
            <path d="M6 54l8-2 10 3 8-2 8 4v15H6z" fill="#d7e3ec" />
            <path d="M8 57l8 1 4 4-8 2zM20 64l10-1 8 4v6H18z" fill="#8b7560" />
          </g>
          <path d="M42 53h30l7 23q1 6-7 6H42q-8 0-7-6z" fill="#c9cfd3" fillOpacity=".85" stroke="#8b9195" strokeWidth="1" />
          <path d="M46 58h20l2 9-8 6-14-2z" fill="#5f7284" />
          <ellipse cx="57" cy="76" rx="15" ry="4" fill="#f0f3f4" />
          <rect x="40" y="38" width="34" height="16" rx="4" fill="#0f0f10" />
          <ellipse cx="57" cy="40" rx="15" ry="2.5" fill="#3a3a3c" />
        </DockApp>
      </div>
      <div className="-mt-[2px] ml-[10px] h-[94px] w-[2px] shrink-0 bg-[#4d4d4c]" />
      <svg className="-mt-2 ml-[15px] shrink-0" width="64" height="92" viewBox="0 0 64 92">
        <path d="M6 0h34v8H6z" fill="#d9d9d9" />
        <path d="M34 5h22v12H34z" fill="#cbd0d2" />
        <rect x="1" y="10" width="60" height="80" rx="1" fill="#f2f2f2" />
        <rect x="0" y="10" width="4" height="80" fill="#4a4a4a" />
        <path d="M40 0v20l20 12V10z" fill="#fff" stroke="#c8c8c8" strokeWidth=".6" />
        <path d="M6 17h22" stroke="#333" strokeWidth="2.5" />
        <path d="M16 26h22M16 29h20M16 32h24" stroke="#222" strokeWidth="2" />
        <path d="M16 38h41M16 41h41M16 44h41M16 47h41M16 50h41M16 53h41M16 56h41M16 59h20M16 64h41M16 67h41M16 70h41M16 73h41M16 76h41M16 82h41M16 85h30" stroke="#9a9a9a" strokeWidth="1.1" />
      </svg>
      <svg className="-mt-2 ml-[9px] shrink-0" width="70" height="92" viewBox="0 0 70 92">
        <defs>
          <linearGradient id="tr" x1="0" y1="0" x2="1" y2="0"><stop offset="0" stopColor="#6b7073" /><stop offset=".25" stopColor="#4b5053" /><stop offset=".5" stopColor="#80868a" /><stop offset=".8" stopColor="#53585b" /><stop offset="1" stopColor="#8a8f92" /></linearGradient>
        </defs>
        <ellipse cx="35" cy="14" rx="33" ry="9" fill="#3b3f41" />
        <path d="M8 14l4-9 8-3 6 5 8-5 5 6 5-7 9 6 2 5 6 2-1 6-12 4H18z" fill="#e6e6e4" />
        <path d="M14 8l8 9 4-9M36 8l-6 12M42 4l6 15 7-10" stroke="#55585a" strokeWidth="1.8" fill="none" />
        <path d="M20 12l8-3 4 6-8 3z" fill="#2fb59b" />
        <path d="M38 14l8-5 4 8-9 4z" fill="#8b4a3b" />
        <path d="M2 14c4 8 18 10 33 10s29-2 33-10l-8 68q-2 8-25 8t-25-8z" fill="url(#tr)" />
        <path d="M10 80q6 7 25 7t25-7" stroke="#a9aeb1" strokeWidth="1.5" fill="none" />
      </svg>
    </div>
  );
}

/* ---------- desktop ---------- */

export default function App() {
  return (
    <div className="relative flex h-[2160px] w-[3840px] flex-col overflow-hidden bg-black">
      <MenuBar />
      <div className="flex h-[1972px] shrink-0 flex-col overflow-hidden rounded-[22px] border-t-2 border-l-2 border-[#5a5a5e] bg-[#eff0f2]">
        <TabStrip />
        <Toolbar />
        <div className="flex min-h-0 flex-1">
          <SideRail />
          <CourseSidebar />
          <div className="w-[29px] shrink-0 border-x-2 border-[#e4e5e7] bg-[#f9f9f9] pt-0.5 pl-[5px]">
            <div className="h-[554px] w-4 rounded-full bg-[#bababa]" />
          </div>
          <ClassRecords />
        </div>
      </div>
      <div className="ml-[79px] w-[11px] flex-1 bg-linear-to-b from-[#a83f2a] to-[#fb5b3a] to-60%" />
      <Dock />
    </div>
  );
}
